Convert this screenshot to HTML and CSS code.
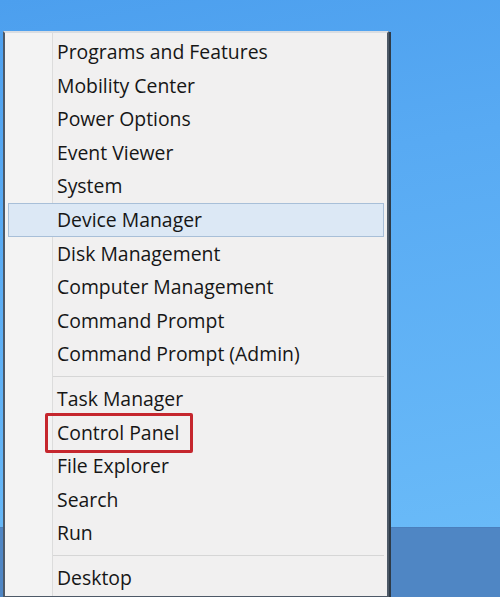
FILE: index.html
```html
<!DOCTYPE html>
<html>
<head>
    <meta charset="UTF-8">
    <title>Quick Link menu</title>
    <link rel="stylesheet" href="styles.css">
</head>
<body>
    <div class="desktop">
        <div class="sky"></div>
        <div class="taskbar"></div>
        <div class="menu">
            <ul class="group">
                <li class="item">Programs and Features</li>
                <li class="item">Mobility Center</li>
                <li class="item">Power Options</li>
                <li class="item">Event Viewer</li>
                <li class="item">System</li>
                <li class="item active">Device Manager</li>
                <li class="item">Disk Management</li>
                <li class="item">Computer Management</li>
                <li class="item">Command Prompt</li>
                <li class="item">Command Prompt (Admin)</li>
            </ul>
            <div class="sep"></div>
            <ul class="group">
                <li class="item">Task Manager</li>
                <li class="item marked">Control Panel<span class="mark"></span></li>
                <li class="item">File Explorer</li>
                <li class="item">Search</li>
                <li class="item">Run</li>
            </ul>
            <div class="sep"></div>
            <ul class="group">
                <li class="item">Desktop</li>
            </ul>
        </div>
    </div>
</body>
</html>
```

FILE: styles.css
```css
body {
    margin: 0;
    background-color: #FFFFFF;
    font-family: 'Open Sans', 'Noto Sans', sans-serif;
}
.desktop {
    position: relative;
    width: 500px;
    height: 597px;
    display: flex;
    flex-direction: column;
    overflow: hidden;
}
.sky {
    flex: 1;
    background: linear-gradient(170deg, #4c9fee 0%, #58aaf3 35%, #69baf8 100%);
}
.taskbar {
    height: 69px;
    background-color: #4f86c4;
    border-top: 1px solid #4a7fbd;
}
.menu {
    position: absolute;
    left: 3px;
    top: 31px;
    width: 382px;
    height: 561px;
    padding-top: 2px;
    background: linear-gradient(90deg, #f3f3f3 0, #f3f3f3 47px, #dcdcdc 47px, #dcdcdc 48px, #f1f0f0 48px);
    border: 2px solid #4d5967;
    border-top-color: #d9dde2;
    box-shadow: 2px 1px 0 #2e3b48;
}
.group {
    list-style: none;
    margin: 0;
    padding: 0;
}
.item {
    position: relative;
    height: 33.6px;
    line-height: 33.8px;
    padding-left: 52px;
    font-size: 19.4px;
    color: #161616;
}
.item.active {
    margin: 0 3px;
    padding-left: 48px;
    background-color: #dce8f5;
    border: 1px solid #a8bfd8;
    height: 31.6px;
    line-height: 31.8px;
}
.mark {
    position: absolute;
    left: 40px;
    top: -3px;
    width: 142px;
    height: 34px;
    border: 3px solid #c5262d;
    border-radius: 2px;
}
.sep {
    height: 1px;
    margin: 5px 3px 5px 48px;
    background-color: #d6d6d6;
}
```
